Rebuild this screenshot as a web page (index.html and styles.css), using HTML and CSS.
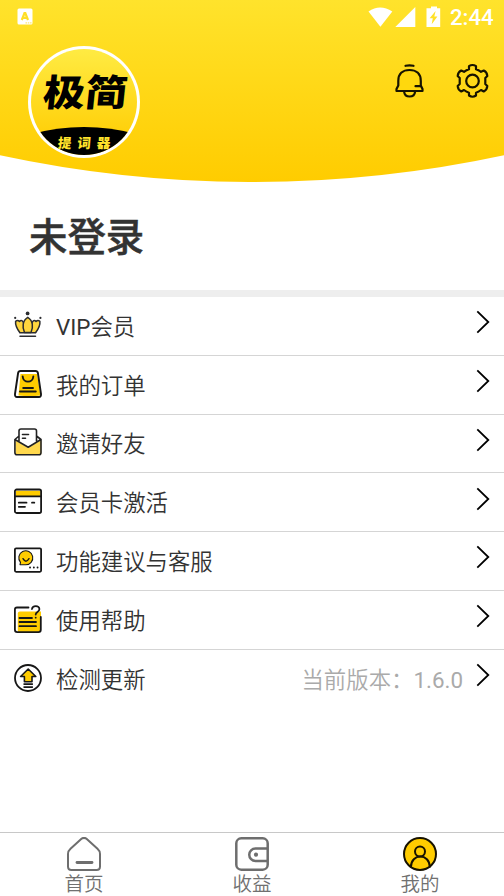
FILE: index.html
```html
<!DOCTYPE html>
<html lang="zh-CN">
<head>
<meta charset="utf-8">
<title>我的</title>
<link rel="stylesheet" href="styles.css">
</head>
<body>
<div class="app">
  <header class="hero">
    <svg class="hero-bg" viewBox="0 0 504 182" aria-hidden="true">
      <defs><linearGradient id="sun" x1="0" y1="0" x2="0" y2="1"><stop offset="0" stop-color="#ffe32c"/><stop offset="1" stop-color="#ffcc00"/></linearGradient></defs>
      <path d="M0 0H504V155.200A1198 1198 0 0 1 0 155.200Z" fill="url(#sun)"/>
    </svg>
    <div class="status">
      <svg class="status-app" width="16" height="17" viewBox="0 0 16 17"><rect x=".5" y=".5" width="15" height="16" rx="1.500" fill="#fff"/><path d="M4.800 12L7.500 5H8.300L11 12M5.500 9.800H10.500" fill="none" stroke="#ffdf26" stroke-width="2.200"/><path d="M8.500 14.800H15" stroke="#ffe873" stroke-width="1.300" stroke-dasharray="1.500 .8"/></svg>
      <div class="status-right">
        <svg width="76" height="22" viewBox="0 0 76 22" fill="#fff"><path d="M.5 5.500Q12 -2.500 24.300 5.500L12.400 20.700Z"/><path d="M47.300 1V21H27.300Z"/><path fill-rule="evenodd" d="M63 .5H69V2.300H72.200V21H58.500V2.300H63ZM67.600 5L61.600 12.300H64.800L63.700 18.200L69.400 10.600H66.300Z"/></svg>
        <span class="clock">2:44</span>
      </div>
    </div>
    <div class="hero-row">
      <svg class="avatar" width="112" height="112" viewBox="0 0 112 112">
        <defs><linearGradient id="logo" x1="0" y1="0" x2="0" y2="1"><stop offset="0" stop-color="#ffeb43"/><stop offset=".8" stop-color="#ffd00a"/></linearGradient><clipPath id="disc"><circle cx="56" cy="56" r="53"/></clipPath></defs>
        <circle cx="56" cy="56" r="56" fill="#fff"/>
        <circle cx="56" cy="56" r="53" fill="url(#logo)"/>
        <path d="M0 89Q56 73 112 89V112H0Z" fill="#000" clip-path="url(#disc)"/>
        <text class="logo-main" transform="translate(14 60) skewX(-6)" textLength="84" lengthAdjust="spacingAndGlyphs">极简</text>
        <text class="logo-sub" transform="translate(29.500 101.500) skewX(-5)">提词器</text>
      </svg>
      <div class="hero-actions">
        <svg width="30" height="36" viewBox="0 0 30 36" fill="none" stroke="#171300" stroke-width="2.200" stroke-linecap="round" stroke-linejoin="round"><path d="M11.500 2.800Q15.500 1.900 19.500 2.800"/><path d="M4.300 18C4.300 10.500 9 7 15.500 7S26.800 10.500 26.800 18V22.500L28.500 26V28H2.500V26L4.300 22.500Z" fill="#ffd80d"/><path d="M21.500 23.200H26.500M10.200 29C10.700 35 20.500 35 21 29"/></svg>
        <svg width="34" height="36" viewBox="0 0 34 36" fill="none" stroke="#171300" stroke-width="2.200" stroke-linejoin="round"><path d="M14 3.200Q17.500 .8 21 3.200V6.200Q23.500 7 26 8.800L28.800 7.500Q32 9 32.300 13L30.300 15V21L32.300 23Q32 27 28.800 28.500L26 27Q23.500 29 21 29.800V32.500Q17.500 35 14 32.500V29.800Q11.500 29 9 27L6.200 28.500Q3 27 2.700 23L4.700 21V15L2.700 13Q3 9 6.200 7.500L9 8.800Q11.500 7 14 6.200Z"/><circle cx="17.500" cy="18" r="6.300"/></svg>
      </div>
    </div>
  </header>
  <h1 class="user">未登录</h1>
  <main class="menu">
    <div class="row">
      <svg class="icon" viewBox="0 0 28 28" fill="#ffd63d" stroke="#2b2c30" stroke-width="1.500" stroke-linecap="round" stroke-linejoin="round"><path d="M5.500 21.500C2.500 18 1 13.500 1.600 10C4.500 8 8.500 10 10.500 14V21.500Z" stroke="none"/><path d="M22 21.500C25 18 26.500 13.500 25.900 10C23 8 19 10 17 14V21.500Z" stroke="none"/><path d="M5.800 21.500C2.500 17 1.200 13.500 1.600 10.300C3 9.200 4.500 9.500 5.500 10.500C7.500 8.300 9.800 10.500 10 13.500M21.700 21.500C25 17 26.300 13.500 25.900 10.300C24.500 9.200 23 9.500 22 10.500C20 8.300 17.700 10.500 17.500 13.500" fill="none"/><path d="M10.500 21.500C8 16 8.500 9.500 13.750 6.300C19 9.500 19.500 16 17 21.500Z"/><path d="M6 21.700H21.500M6 25.300H21.500"/><g fill="#2b2c30" stroke="none"><circle cx="13.600" cy="2.400" r="1.900"/><circle cx="1.200" cy="6.900" r="1.100"/><circle cx="26.400" cy="6.900" r="1.100"/></g></svg>
      <span class="label"><span class="latin">VIP</span>会员</span><svg class="chev" viewBox="0 0 14 24"><path d="M1.300 1.300L12.300 12L1.300 22.700"/></svg>
    </div>
    <div class="row">
      <svg class="icon" viewBox="0 0 28 28" fill="none" stroke="#171717" stroke-width="1.900" stroke-linecap="round" stroke-linejoin="round"><path d="M6.500 4H23L26.500 25.500Q16 27 4.500 25.500Z" fill="#fc0" stroke="none"/><path d="M6.500 1H21.500Q23.500 1 23.900 3L27 24Q27.200 27 25 27H3Q.8 27 1 24L4.100 3Q4.500 1 6.500 1Z"/><path d="M8.700 6.500C9 13.300 19 13.300 19.300 6.500M9.200 18H19M6 21.500H21.800"/></svg>
      <span class="label">我的订单</span><svg class="chev" viewBox="0 0 14 24"><path d="M1.300 1.300L12.300 12L1.300 22.700"/></svg>
    </div>
    <div class="row">
      <svg class="icon" viewBox="0 0 28 28" fill="none" stroke="#222" stroke-width="1.600" stroke-linecap="round" stroke-linejoin="round"><path d="M1.500 12.500L14.200 20L27.300 12V26.500H1.500Z" fill="#ffd84d" stroke="none"/><path d="M.9 11.500V24.500Q.9 26.800 3 26.800H25Q27 26.800 27 24.500V11.500L14.200 19.200ZM.9 11.500L5 8M27 11.500L22.500 8M5 13V3Q5 1 7 1H20.500Q22.500 1 22.500 3V13M8.500 6.500H14.500M8.500 10.300H11.500"/></svg>
      <span class="label">邀请好友</span><svg class="chev" viewBox="0 0 14 24"><path d="M1.300 1.300L12.300 12L1.300 22.700"/></svg>
    </div>
    <div class="row">
      <svg class="icon" viewBox="0 0 28 28" fill="none" stroke="#171717" stroke-width="1.800" stroke-linecap="round" stroke-linejoin="round"><path d="M2 3.800H26.500V9H2Z" fill="#fc0" stroke="none"/><rect x=".9" y="2.500" width="26.200" height="23.500" rx="1.800"/><path d="M1 9.300H27M4.800 15.700H12.500M18 15.700H20.300M4.800 19.800H11"/></svg>
      <span class="label">会员卡激活</span><svg class="chev" viewBox="0 0 14 24"><path d="M1.300 1.300L12.300 12L1.300 22.700"/></svg>
    </div>
    <div class="row">
      <svg class="icon" viewBox="0 0 28 28" fill="none" stroke="#171717" stroke-width="1.800" stroke-linecap="round" stroke-linejoin="round"><rect x=".9" y="2.300" width="26.200" height="23.500" rx="1.200"/><path d="M6 18.600L6.500 16.400A7 7 0 1 1 11.500 18.800Z" fill="#fc0" stroke-width="1.100"/><path d="M9 12.700Q11.800 17.700 15 12.700" stroke-width="1.400"/><path d="M16 21.500H16.100M19.800 21.500H19.900M23.500 21.500H23.600"/></svg>
      <span class="label">功能建议与客服</span><svg class="chev" viewBox="0 0 14 24"><path d="M1.300 1.300L12.300 12L1.300 22.700"/></svg>
    </div>
    <div class="row">
      <svg class="icon" viewBox="0 0 28 28" fill="none" stroke="#171717" stroke-width="1.800" stroke-linecap="round" stroke-linejoin="round"><path d="M3.800 8.500Q3.800 6.500 5.800 6.500H27V27H3.800Z" fill="#fc0" stroke="none"/><path d="M14.500 2.500H3Q.9 2.500 .9 4.700V24.800Q.9 27.100 3.300 27.100H24.500Q26.800 27.100 26.800 24.800V12"/><path d="M18 4C18.500 .1 25.500 0 25.400 4.300C25.300 7.300 21.700 6.800 21.700 9.600M21.700 12.600V12.700M5.500 13H18M5.500 17H22M5.500 21.200H22"/></svg>
      <span class="label">使用帮助</span><svg class="chev" viewBox="0 0 14 24"><path d="M1.300 1.300L12.300 12L1.300 22.700"/></svg>
    </div>
    <div class="row last">
      <svg class="icon" viewBox="0 0 28 28" fill="none" stroke="#171717" stroke-width="1.800" stroke-linejoin="round"><circle cx="14" cy="14" r="13"/><path d="M14.200 5L21.800 12.500H18V17.800H10.400V12.500H6.600Z" fill="#fc0" stroke-width="1.600"/><path d="M9.500 20.100H18.900M9.500 23.100H18.900" stroke-width="1.600"/></svg>
      <span class="label">检测更新</span><span class="version">当前版本：<span class="latin">1.6.0</span></span><svg class="chev" viewBox="0 0 14 24"><path d="M1.300 1.300L12.300 12L1.300 22.700"/></svg>
    </div>
  </main>
  <nav class="tabs">
    <div class="tab">
      <svg viewBox="0 0 34 34" fill="none" stroke="#6e6e6e" stroke-width="2" stroke-linecap="round" stroke-linejoin="round"><path d="M14.500 1.800Q17 0 19.500 1.800L30.500 11.800Q33 14 33 17V29.500Q33 33 29.500 33H4.500Q1 33 1 29.500V17Q1 14 3.500 11.800Z"/><path d="M10 25.500H25" stroke-width="2.800"/></svg>
      <span>首页</span>
    </div>
    <div class="tab">
      <svg viewBox="0 0 34 34" fill="none" stroke="#6e6e6e" stroke-width="2.500"><rect x="1.300" y="1.300" width="31.400" height="31.400" rx="5"/><path d="M33 11.500H20.500A6.200 6.200 0 0 0 20.500 24H33"/><circle cx="21" cy="17.700" r="2.100" fill="#6e6e6e" stroke="none"/></svg>
      <span>收益</span>
    </div>
    <div class="tab">
      <svg viewBox="0 0 34 34" fill="none" stroke="#171200" stroke-width="2"><circle cx="17" cy="17" r="16" fill="#fc0"/><circle cx="17" cy="14.500" r="5"/><path d="M7.800 30.500C8 15.800 26.700 15.800 26.900 30.500"/></svg>
      <span>我的</span>
    </div>
  </nav>
</div>
</body>
</html>
```
FILE: styles.css
```css
* { box-sizing: border-box; }
body { margin: 0; background: #fff; color: #333; font-family: Roboto, "Noto Sans CJK SC", sans-serif; }
svg { display: block; flex: none; }
.app { height: 896px; display: flex; flex-direction: column; overflow: hidden; }
.hero { position: relative; height: 182px; flex: none; }
.hero-bg { position: absolute; inset: 0; width: 504px; height: 182px; z-index: -1; }
.status { height: 34px; padding: 6px 11px 0 17px; display: flex; justify-content: space-between; }
.status-app { margin-top: 2px; }
.status-right { display: flex; gap: 6px; }
.clock { color: #fff; font-size: 22.200px; line-height: 23px; font-weight: 500; width: 43px; white-space: nowrap; }
.hero-row { display: flex; justify-content: space-between; padding: 12px 15px 0 28px; }
.hero-actions { display: flex; gap: 31px; padding-top: 17px; }
.logo-main { font: 900 37px "Noto Sans CJK SC", sans-serif; }
.logo-sub { font: 900 13.500px "Noto Sans CJK SC", sans-serif; letter-spacing: 6px; fill: #ffe32c; }
.user { margin: 0; height: 115px; flex: none; padding: 26px 29px 0; border-bottom: 7px solid #eee; font-size: 38.400px; line-height: 60px; font-weight: 500; -webkit-text-stroke: .5px #333; }
.menu { flex: 1; font-weight: 350; }
.row { height: 58.770px; display: flex; align-items: center; padding: 0 14px; border-bottom: 1px solid #d5d5d5; }
.row.last { border-bottom: 0; }
.icon { width: 28px; height: 28px; margin-right: 14px; margin-bottom: 2px; }
.label { font-size: 22.400px; line-height: 32px; padding-top: 2px; }
.version { margin-left: auto; margin-right: 13px; font-size: 22.400px; line-height: 32px; padding-top: 2px; color: #aaa; }
.latin { font-weight: 400; }
.chev { width: 14px; height: 24px; margin-left: auto; margin-bottom: 7px; fill: none; stroke: #000; stroke-width: 1.800px; }
.version + .chev { margin-left: 0; }
.tabs { height: 64px; flex: none; border-top: 1px solid #c8c8c8; display: flex; }
.tab { flex: 1; display: flex; flex-direction: column; align-items: center; padding-top: 4px; color: #707070; font-size: 19.500px; line-height: 24px; font-weight: 350; }
.tab svg { width: 34px; height: 34px; margin-bottom: 2px; }
```
